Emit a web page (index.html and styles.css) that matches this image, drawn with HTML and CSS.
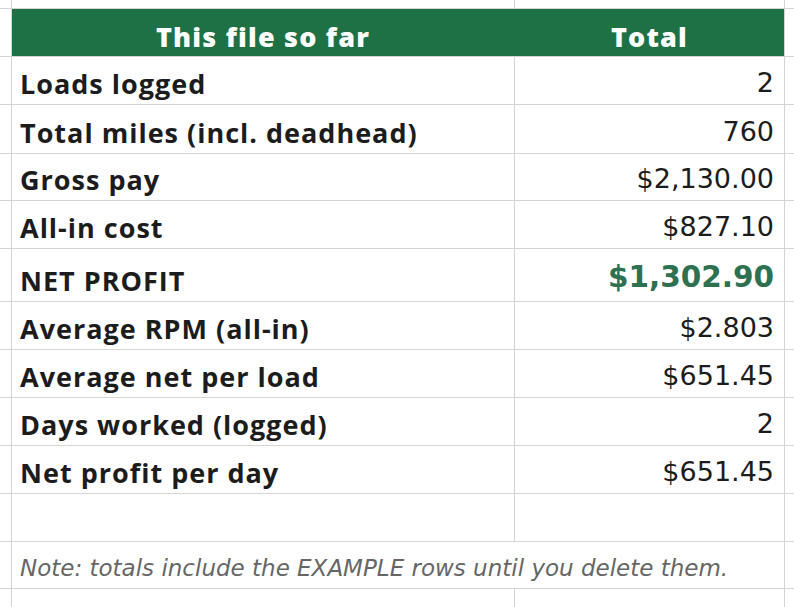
FILE: index.html
```html
<!DOCTYPE html>
<html>
<head>
<meta charset="utf-8">
<link rel="stylesheet" href="styles.css">
</head>
<body>
<div class="sheet">
  <div class="c"></div><div class="c"></div><div class="c"></div><div class="c"></div>

  <div class="c"></div><div class="head"><span class="hA">This file so far</span><span class="hB">Total</span></div><div class="c"></div>

  <div class="c"></div><div class="c lbl">Loads logged</div><div class="c val">2</div><div class="c"></div>
  <div class="c"></div><div class="c lbl">Total miles (incl. deadhead)</div><div class="c val">760</div><div class="c"></div>
  <div class="c"></div><div class="c lbl">Gross pay</div><div class="c val">$2,130.00</div><div class="c"></div>
  <div class="c"></div><div class="c lbl">All-in cost</div><div class="c val">$827.10</div><div class="c"></div>
  <div class="c"></div><div class="c lbl">NET PROFIT</div><div class="c val net">$1,302.90</div><div class="c"></div>
  <div class="c"></div><div class="c lbl">Average RPM (all-in)</div><div class="c val">$2.803</div><div class="c"></div>
  <div class="c"></div><div class="c lbl">Average net per load</div><div class="c val">$651.45</div><div class="c"></div>
  <div class="c"></div><div class="c lbl">Days worked (logged)</div><div class="c val">2</div><div class="c"></div>
  <div class="c"></div><div class="c lbl">Net profit per day</div><div class="c val">$651.45</div><div class="c"></div>
  <div class="c"></div><div class="c"></div><div class="c"></div><div class="c"></div>
  <div class="c"></div><div class="c note">Note: totals include the EXAMPLE rows until you delete them.</div><div class="c"></div>
  <div class="c"></div><div class="c"></div><div class="c"></div><div class="c"></div>
</div>
</body>
</html>
```
FILE: styles.css
```css
html, body {
  margin: 0;
  padding: 0;
  background: #fff;
}
body {
  width: 794px;
  height: 607px;
  overflow: hidden;
}
.sheet {
  display: grid;
  grid-template-columns: 11px 502px 269px 10px;
  grid-template-rows: 8px 47px 47px 48px 46px 47px 52px 47px 47px 47px 47px 47px 46px 30px;
  gap: 1px;
  background: #d4d4d4;
  font-family: "Open Sans", "Liberation Sans", sans-serif;
  color: #1c1c1c;
}
.c {
  background: #fff;
}
.head {
  grid-column: span 2;
  background: #1e7145;
  display: grid;
  grid-template-columns: 502px 1px 269px;
  align-items: end;
  color: #fff;
  font-weight: 800;
  font-size: 27px;
  letter-spacing: 1.2px;
  padding-bottom: 6px;
  line-height: 1;
  box-sizing: border-box;
}
.hA {
  text-align: center;
}
.hB {
  grid-column: 3;
  text-align: center;
}
.lbl, .val {
  display: flex;
  align-items: flex-end;
  font-weight: 700;
  font-size: 27px;
  padding: 0 10px 7px 8px;
  line-height: 1;
}
.lbl {
  letter-spacing: 1px;
}
.val {
  justify-content: flex-end;
  font-family: "DejaVu Sans", sans-serif;
  font-weight: 400;
  font-size: 27px;
  padding-bottom: 8px;
}
.net {
  color: #2d7150;
  font-weight: 700;
  font-size: 29.5px;
  padding-bottom: 9px;
}
.note {
  grid-column: span 2;
  display: flex;
  align-items: flex-end;
  padding: 0 0 8px 8px;
  font-family: "DejaVu Sans", sans-serif;
  font-style: italic;
  font-size: 23px;
  color: #666;
  line-height: 1;
}
```
